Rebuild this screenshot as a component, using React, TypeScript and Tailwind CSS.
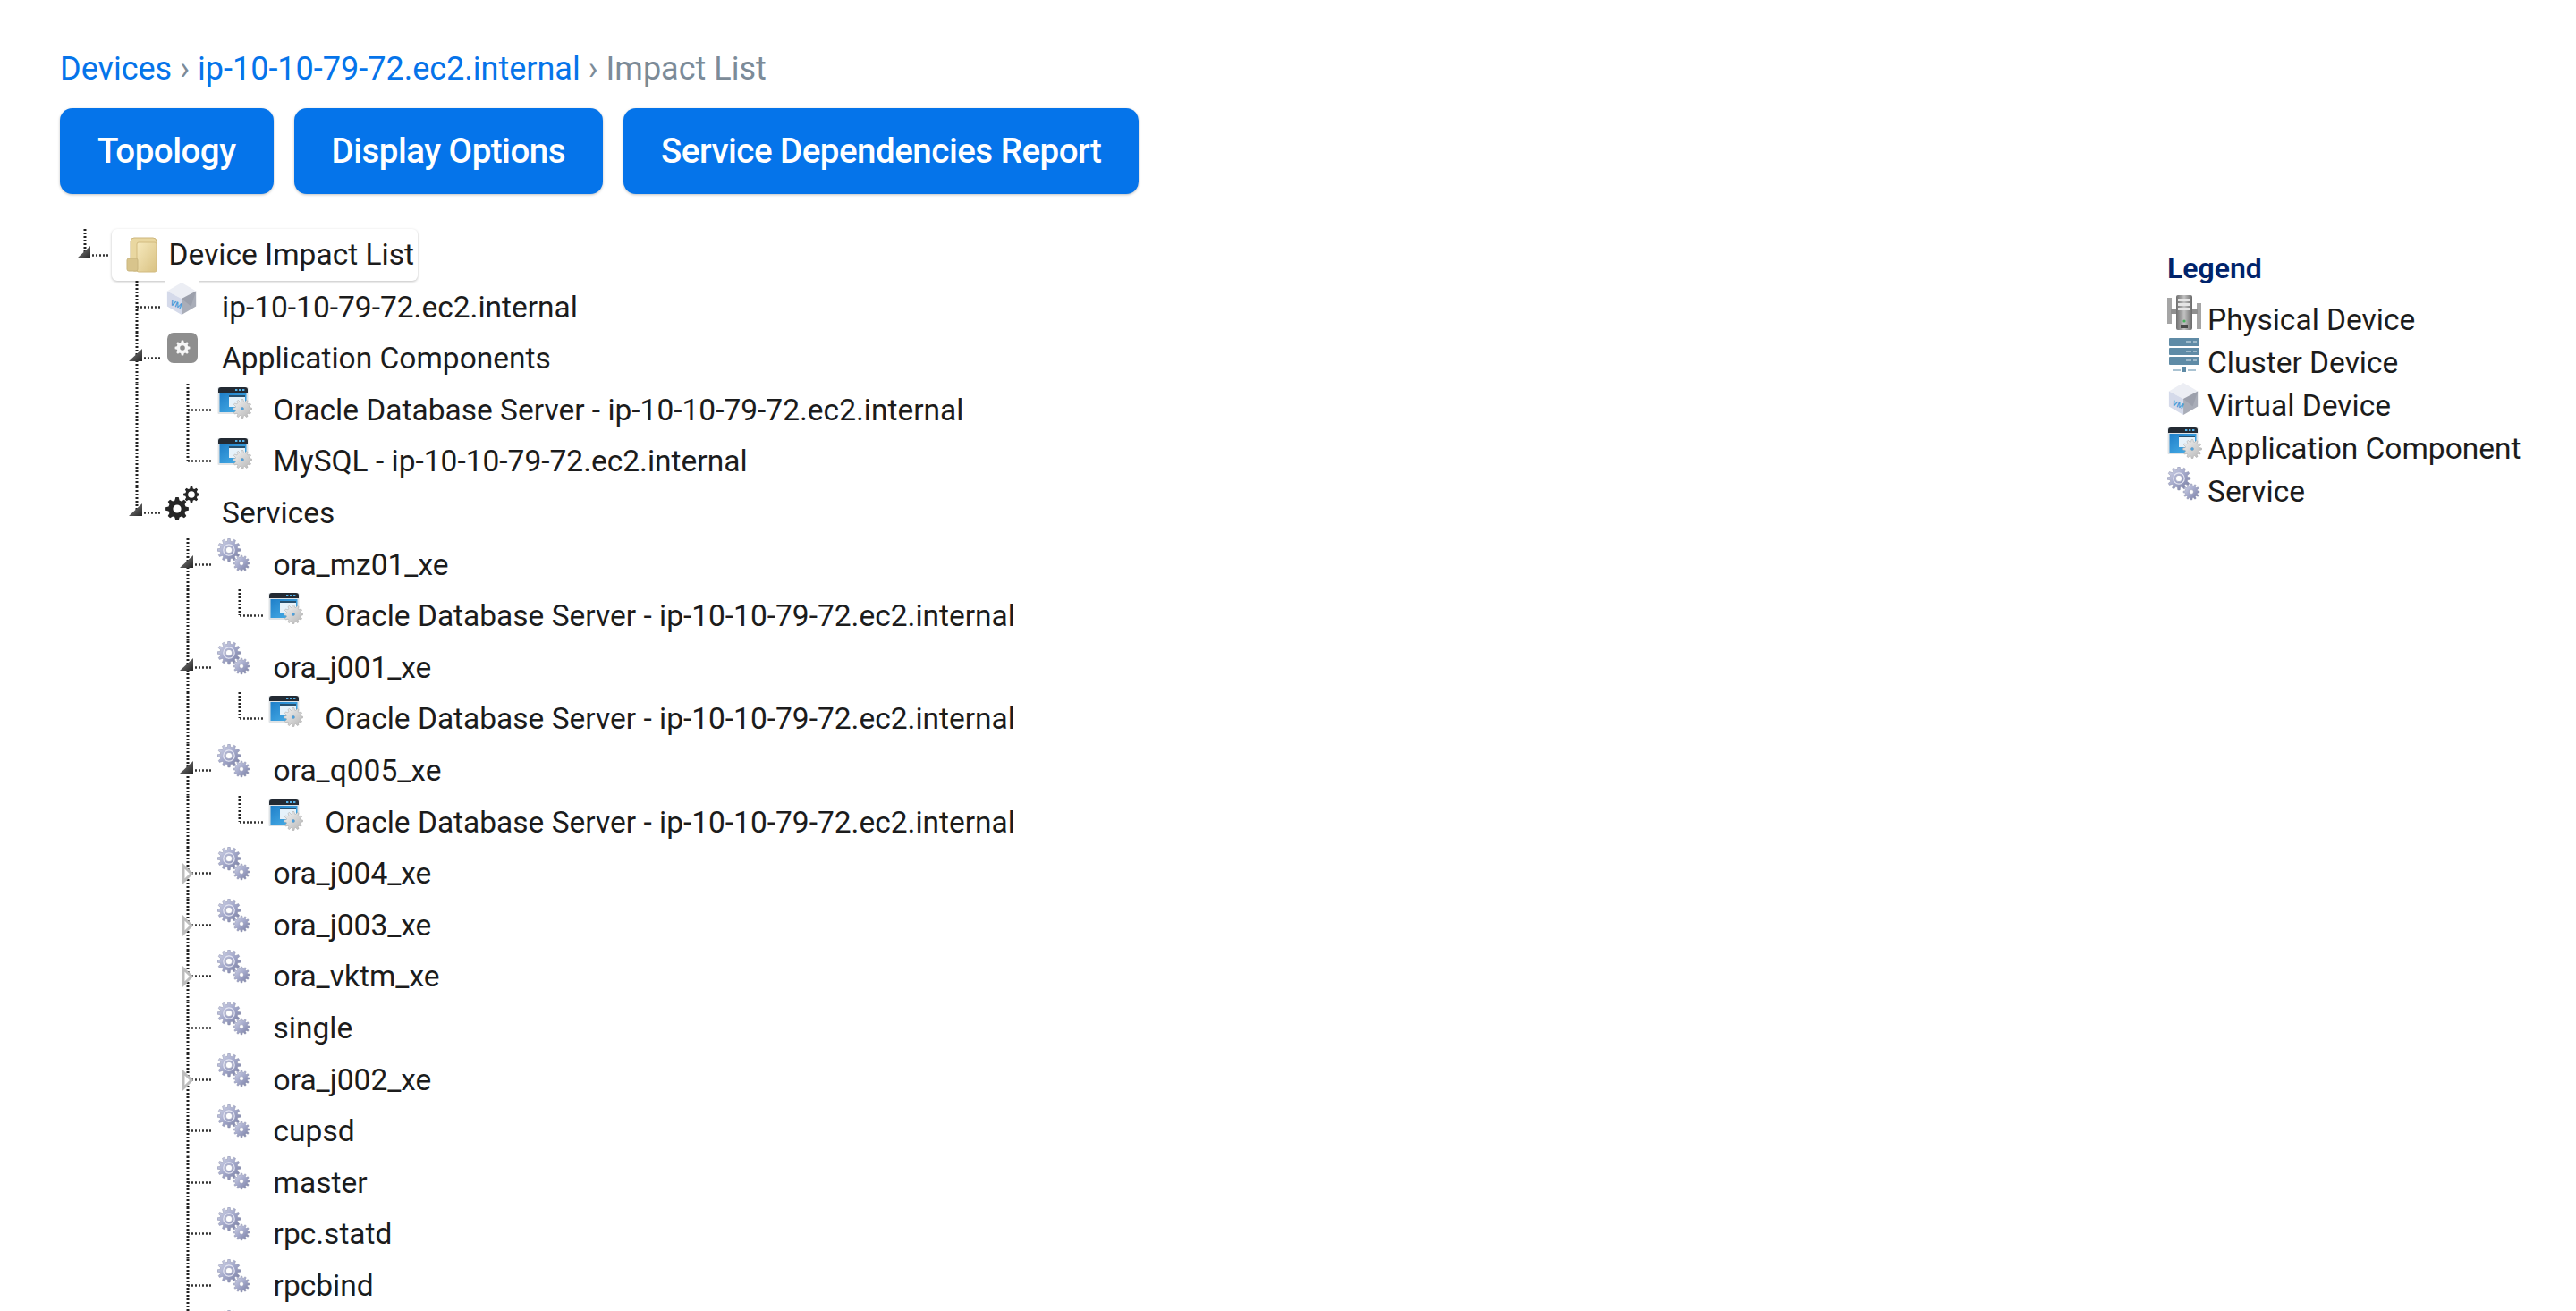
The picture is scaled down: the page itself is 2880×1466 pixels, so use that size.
import type { ReactNode } from "react";

type IconName = "folder" | "vm" | "appGroup" | "app" | "services" | "gear";

interface TreeNode {
  label: string;
  icon: IconName;
  state?: "open" | "closed";
  children?: TreeNode[];
}

const HOST = "ip-10-10-79-72.ec2.internal";
const ORACLE = `Oracle Database Server - ${HOST}`;

const oracleChild: TreeNode[] = [{ label: ORACLE, icon: "app" }];

const tree: TreeNode = {
  label: "Device Impact List",
  icon: "folder",
  state: "open",
  children: [
    { label: HOST, icon: "vm" },
    {
      label: "Application Components",
      icon: "appGroup",
      state: "open",
      children: [
        { label: ORACLE, icon: "app" },
        { label: `MySQL - ${HOST}`, icon: "app" },
      ],
    },
    {
      label: "Services",
      icon: "services",
      state: "open",
      children: [
        { label: "ora_mz01_xe", icon: "gear", state: "open", children: oracleChild },
        { label: "ora_j001_xe", icon: "gear", state: "open", children: oracleChild },
        { label: "ora_q005_xe", icon: "gear", state: "open", children: oracleChild },
        { label: "ora_j004_xe", icon: "gear", state: "closed" },
        { label: "ora_j003_xe", icon: "gear", state: "closed" },
        { label: "ora_vktm_xe", icon: "gear", state: "closed" },
        { label: "single", icon: "gear" },
        { label: "ora_j002_xe", icon: "gear", state: "closed" },
        { label: "cupsd", icon: "gear" },
        { label: "master", icon: "gear" },
        { label: "rpc.statd", icon: "gear" },
        { label: "rpcbind", icon: "gear" },
        { label: "", icon: "gear" },
        { label: "", icon: "gear" },
      ],
    },
  ],
};

const legend: { label: string; icon: ReactNode }[] = [
  { label: "Physical Device", icon: <PhysicalIcon /> },
  { label: "Cluster Device", icon: <ClusterIcon /> },
  { label: "Virtual Device", icon: <VmIcon /> },
  { label: "Application Component", icon: <AppIcon /> },
  { label: "Service", icon: <GearIcon /> },
];

// builds a cog outline, the hole is cut with evenodd
function gearPath(cx: number, cy: number, r: number, teeth: number, hole: number) {
  const root = r * 0.76;
  const step = (Math.PI * 2) / teeth;
  const pts: string[] = [];
  for (let i = 0; i < teeth; i++) {
    const a = i * step;
    const corners: [number, number][] = [
      [root, a - step * 0.34],
      [r, a - step * 0.17],
      [r, a + step * 0.17],
      [root, a + step * 0.34],
    ];
    corners.forEach(([rad, ang]) => {
      pts.push(`${(cx + rad * Math.cos(ang)).toFixed(2)} ${(cy + rad * Math.sin(ang)).toFixed(2)}`);
    });
  }
  const circle = `M${cx - hole} ${cy}a${hole} ${hole} 0 1 0 ${hole * 2} 0a${hole} ${hole} 0 1 0 ${-hole * 2} 0Z`;
  return `M${pts.join("L")}Z${circle}`;
}

function Defs() {
  return (
    <svg className="absolute h-0 w-0" aria-hidden="true">
      <defs>
        <linearGradient id="gearFill" x1="0" y1="0" x2="1" y2="1">
          <stop offset="0" stopColor="#d6d9ea" />
          <stop offset="0.5" stopColor="#a4a9cb" />
          <stop offset="1" stopColor="#74799d" />
        </linearGradient>
        <linearGradient id="silverFill" x1="0" y1="0" x2="1" y2="1">
          <stop offset="0" stopColor="#f4f4f4" />
          <stop offset="1" stopColor="#b5b5b5" />
        </linearGradient>
        <linearGradient id="windowFill" x1="0" y1="0" x2="1" y2="1">
          <stop offset="0" stopColor="#1f7fc9" />
          <stop offset="1" stopColor="#4db3ea" />
        </linearGradient>
        <linearGradient id="folderFill" x1="0" y1="0" x2="1" y2="1">
          <stop offset="0" stopColor="#f6e9bd" />
          <stop offset="1" stopColor="#d9c283" />
        </linearGradient>
        <linearGradient id="arrowFill" x1="0" y1="0" x2="1" y2="1">
          <stop offset="0" stopColor="#8a8a8a" />
          <stop offset="1" stopColor="#262626" />
        </linearGradient>
        <linearGradient id="towerFill" x1="0" y1="0" x2="1" y2="0">
          <stop offset="0" stopColor="#6f6f6f" />
          <stop offset="0.5" stopColor="#c2c2c2" />
          <stop offset="1" stopColor="#6a6a6a" />
        </linearGradient>
      </defs>
    </svg>
  );
}

function GearIcon() {
  return (
    <svg viewBox="0 0 40 40" className="h-10 w-10 shrink-0">
      <path d={gearPath(13, 13, 13, 12, 3.6)} fill="url(#gearFill)" fillRule="evenodd" stroke="#8d90ac" strokeWidth="0.5" />
      <path d={gearPath(27, 28, 9, 12, 2.4)} fill="url(#gearFill)" fillRule="evenodd" stroke="#8d90ac" strokeWidth="0.5" />
      <circle cx="13" cy="13" r="6.2" fill="none" stroke="#e6e7f2" strokeWidth="1.2" />
    </svg>
  );
}

function AppIcon() {
  return (
    <svg viewBox="0 0 40 40" className="h-10 w-10 shrink-0">
      <rect x="0.5" y="4" width="34" height="30" rx="1" fill="#dfe3e6" />
      <path d="M1 7a3 3 0 0 1 3-3h27a3 3 0 0 1 3 3v3H1Z" fill="#232a33" />
      <rect x="20" y="6" width="2.4" height="2" fill="#58b4ea" />
      <rect x="24" y="6" width="2.4" height="2" fill="#58b4ea" />
      <rect x="28" y="6" width="2.4" height="2" fill="#58b4ea" />
      <rect x="2.5" y="11" width="30" height="21" fill="url(#windowFill)" />
      <rect x="13" y="13" width="18" height="13" fill="#e6f2fa" />
      <rect x="13" y="13" width="18" height="2" fill="#27506e" />
      <path d={gearPath(28, 28, 10.5, 12, 1.6)} fill="url(#silverFill)" fillRule="evenodd" stroke="#a3a3a3" strokeWidth="0.5" />
      <circle cx="28" cy="28" r="1.4" fill="#4d9fdc" />
    </svg>
  );
}

function VmIcon() {
  return (
    <svg viewBox="0 0 40 40" className="h-10 w-[38px] shrink-0 bg-white">
      <path d="M19 1 36 11 19 20 2 11Z" fill="#eceef4" />
      <path d="M2 11 19 20V39L2 29Z" fill="#d5daea" />
      <path d="M19 20 36 11V29L19 39Z" fill="#a9adb8" />
      <path d="M19 20 36 11 30 29Z" fill="#8f949f" opacity="0.5" />
      <text x="5" y="27" fontSize="9" fontWeight="700" fill="#4b9bd8" fontFamily="Roboto, sans-serif" transform="rotate(22 5 27)">
        VM
      </text>
    </svg>
  );
}

function AppGroupIcon() {
  return (
    <svg viewBox="0 0 40 40" className="h-10 w-10 shrink-0">
      <rect x="2" y="1" width="34" height="34" rx="7" fill="#8e8e8e" />
      <path d={gearPath(19, 18, 8.5, 8, 2.8)} fill="#f6f6f6" fillRule="evenodd" />
    </svg>
  );
}

function ServicesIcon() {
  return (
    <svg viewBox="0 0 40 40" className="h-10 w-10 shrink-0">
      <path d={gearPath(13, 25, 13, 8, 4.6)} fill="#262626" fillRule="evenodd" />
      <path d={gearPath(29, 9, 9, 8, 3.8)} fill="#262626" fillRule="evenodd" />
    </svg>
  );
}

function FolderIcon() {
  return (
    <svg viewBox="0 0 40 40" className="h-10 w-10 shrink-0">
      <rect x="5" y="1" width="29" height="37" rx="4" fill="#e9d7a0" stroke="#cdb67c" />
      <rect x="12" y="6" width="22" height="33" rx="2" fill="url(#folderFill)" stroke="#d2bb80" />
      <rect x="1" y="24" width="12" height="14" rx="2" fill="#d8c48c" stroke="#c9b57e" />
    </svg>
  );
}

function PhysicalIcon() {
  return (
    <svg viewBox="0 0 40 40" className="h-10 w-10 shrink-0">
      <rect x="0" y="3" width="5" height="29" fill="#a5a5a5" />
      <rect x="33" y="9" width="5" height="29" fill="#a5a5a5" />
      <rect x="4" y="15" width="30" height="6" fill="#8f8f8f" />
      <rect x="10" y="0" width="18" height="39" rx="2" fill="url(#towerFill)" />
      <rect x="12" y="4" width="14" height="3" fill="#e5e5e5" />
      <rect x="12" y="9" width="14" height="3" fill="#e5e5e5" />
      <rect x="12" y="14" width="14" height="3" fill="#e5e5e5" />
      <circle cx="19" cy="29" r="1.6" fill="#46b05c" />
      <rect x="15" y="33" width="8" height="4" fill="#4a4a4a" />
    </svg>
  );
}

function ClusterIcon() {
  return (
    <svg viewBox="0 0 40 40" className="h-10 w-10 shrink-0">
      <rect x="2" y="0" width="34" height="9" rx="1" fill="#5f8ba6" />
      <rect x="2" y="11" width="34" height="8" rx="1" fill="#5f8ba6" />
      <rect x="2" y="21" width="34" height="9" rx="1" fill="#5f8ba6" />
      <path d="M21 4h6M29 4h4M21 15h6M29 15h4M21 25h6M29 25h4" stroke="#dbe7ee" strokeWidth="1" />
      <path d="M6 36h9M23 36h9" stroke="#8fb0c4" strokeWidth="1.6" />
      <rect x="17" y="32" width="4" height="6" fill="#5f8ba6" />
    </svg>
  );
}

function NodeIcon({ name }: { name: IconName }) {
  if (name === "folder") return <FolderIcon />;
  if (name === "vm") return <VmIcon />;
  if (name === "appGroup") return <AppGroupIcon />;
  if (name === "app") return <AppIcon />;
  if (name === "services") return <ServicesIcon />;
  return <GearIcon />;
}

// one indent cell: vertical dots, optional elbow and expander arrow
function Connector({
  down,
  half,
  elbow,
  state,
}: {
  down?: boolean;
  half?: boolean;
  elbow?: boolean;
  state?: "open" | "closed";
}) {
  return (
    <svg viewBox="0 0 57.6 57.6" className="h-[57.6px] w-[57.6px] shrink-0">
      {down && <line x1="28" y1="0" x2="28" y2="57.6" stroke="#222" strokeWidth="3" strokeDasharray="2 2" />}
      {half && <line x1="28" y1="0" x2="28" y2="29" stroke="#222" strokeWidth="3" strokeDasharray="2 2" />}
      {elbow && <line x1="28" y1="29.5" x2="56" y2="29.5" stroke="#333" strokeWidth="2.4" strokeDasharray="2 2" />}
      {state === "open" && <polygon points="34,19 34,33 19,33" fill="url(#arrowFill)" />}
      {state === "closed" && <polygon points="23,21 32,30 23,39" fill="#fff" stroke="#bdbdbd" strokeWidth="3" />}
    </svg>
  );
}

function Row({ node, guides, last }: { node: TreeNode; guides: boolean[]; last: boolean }) {
  const isRoot = guides.length === 0;
  return (
    <>
      <div className="flex h-[57.6px] items-start">
        {guides.map((g, i) => (
          <Connector key={i} down={g} />
        ))}
        <Connector down={!last} half={last} elbow state={node.state} />
        {isRoot ? (
          <div className="flex h-[57.6px] w-[342px] items-center rounded-md bg-white pl-[16px] shadow-[0_1px_3px_rgba(0,0,0,0.25)]">
            <NodeIcon name={node.icon} />
            <span className="ml-[8px] whitespace-nowrap pt-px">{node.label}</span>
          </div>
        ) : (
          <div className="flex items-start">
            <div className="w-[65.8px] shrink-0 pl-[3px]">
              <NodeIcon name={node.icon} />
            </div>
            <span className="whitespace-nowrap pt-px leading-[57.6px]">{node.label}</span>
          </div>
        )}
      </div>
      {node.children?.map((child, i) => (
        <Row
          key={child.label + i}
          node={child}
          guides={isRoot ? [false] : [...guides, !last]}
          last={i === node.children!.length - 1}
        />
      ))}
    </>
  );
}

export default function App() {
  return (
    <div className="h-[1466px] overflow-hidden bg-white pl-[67px] pt-[53px] font-[Roboto,sans-serif] text-[33.5px] text-[#1c1c1c]">
      <Defs />
      <nav className="flex h-12 items-center gap-[9px] text-[36px] text-[#0574ea]">
        <a href="#">Devices</a>
        <span className="text-[#7c8b98]">›</span>
        <a href="#">{HOST}</a>
        <span className="text-[#7c8b98]">›</span>
        <span className="text-[#7c8b98]">Impact List</span>
      </nav>

      <div className="mt-[20px] flex gap-[23px]">
        {["Topology", "Display Options", "Service Dependencies Report"].map((label) => (
          <button
            key={label}
            className="h-24 rounded-[14px] bg-[#0574ea] px-[42px] text-[38.5px] font-medium tracking-[-0.5px] text-white shadow-[0_1px_3px_rgba(0,0,0,0.25)]"
          >
            {label}
          </button>
        ))}
      </div>

      <div className="mt-[39px] flex">
        <div className="min-w-0 flex-1">
          <Row node={tree} guides={[]} last />
        </div>
        <aside className="w-[457px] shrink-0 pt-[20px]">
          <h2 className="mb-[10px] h-12 text-[32px] font-semibold leading-[48px] text-[#00236b]">Legend</h2>
          {legend.map((item) => (
            <div key={item.label} className="flex h-12 items-start">
              <div className="-mt-[4px] w-[45px] shrink-0">{item.icon}</div>
              <span className="whitespace-nowrap leading-[48px]">{item.label}</span>
            </div>
          ))}
        </aside>
      </div>
    </div>
  );
}
